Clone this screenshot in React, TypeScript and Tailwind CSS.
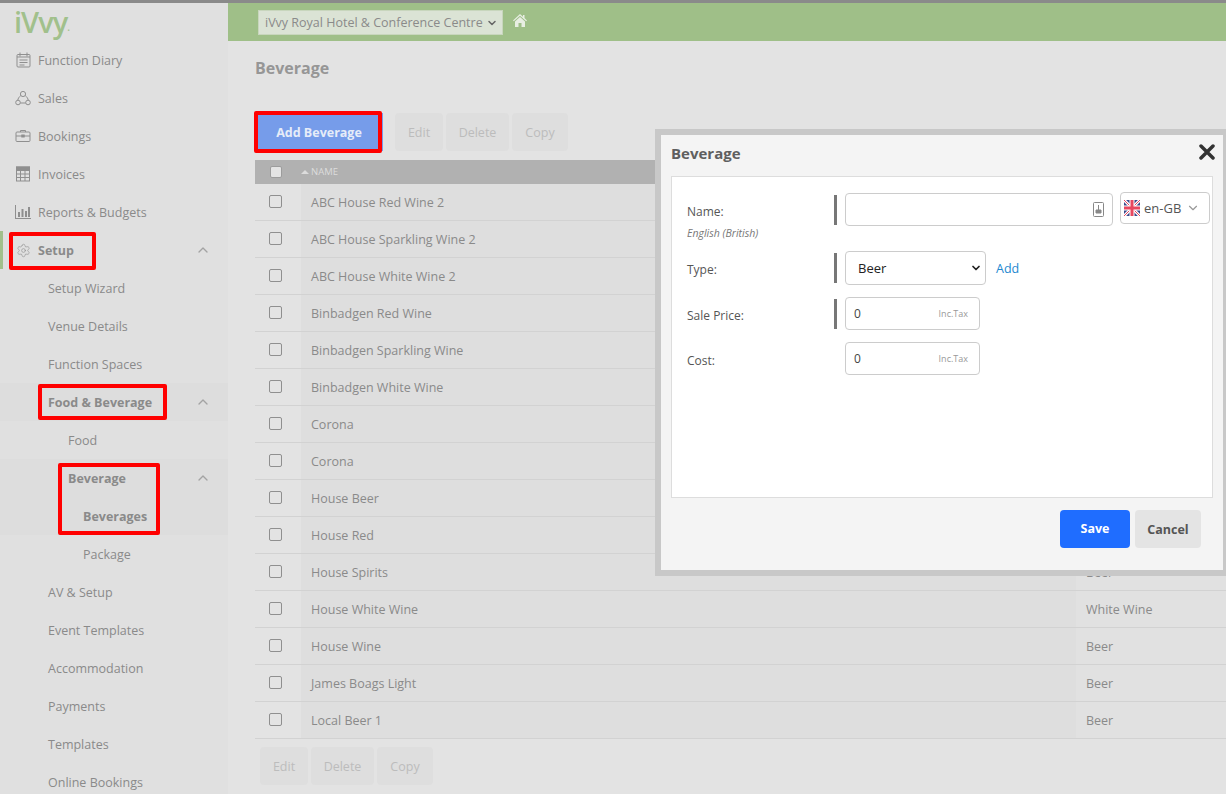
import { ChevronDown, ChevronUp, Settings } from 'lucide-react';
import type { ReactNode } from 'react';

const font = { fontFamily: '"Open Sans", sans-serif' };

const rows = [
  ['ABC House Red Wine 2', ''],
  ['ABC House Sparkling Wine 2', ''],
  ['ABC House White Wine 2', ''],
  ['Binbadgen Red Wine', ''],
  ['Binbadgen Sparkling Wine', ''],
  ['Binbadgen White Wine', ''],
  ['Corona', ''],
  ['Corona', ''],
  ['House Beer', ''],
  ['House Red', ''],
  ['House Spirits', 'Beer'],
  ['House White Wine', 'White Wine'],
  ['House Wine', 'Beer'],
  ['James Boags Light', 'Beer'],
  ['Local Beer 1', 'Beer'],
];

const DiaryIcon = () => (
  <svg width="15" height="16" viewBox="0 0 15 16" fill="none" stroke="#8f8f8f" strokeWidth="1">
    <rect x="1" y="2.500" width="13" height="12.500" rx="1" />
    <path d="M4 0.500v4M11 0.500v4M1 5h13M3.500 8h8M3.500 10.500h8M3.500 13h5" />
  </svg>
);

const SalesIcon = () => (
  <svg width="16" height="16" viewBox="0 0 16 16" fill="none" stroke="#8f8f8f" strokeWidth="1">
    <circle cx="8" cy="4" r="2.600" />
    <circle cx="3" cy="12.500" r="2.300" />
    <circle cx="13" cy="12.500" r="2.300" />
    <path d="M5.800 5.500C4 7 3 8.500 2.800 10.200M10.200 5.500c1.800 1.500 2.800 3 3 4.700M5.300 13h5.400" />
  </svg>
);

const BriefcaseIcon = () => (
  <svg width="16" height="16" viewBox="0 0 16 16" fill="none" stroke="#8f8f8f" strokeWidth="1">
    <rect x="1" y="4" width="14" height="9.500" rx="1" />
    <path d="M5.500 4V2.500h5V4M1 8h14" />
    <rect x="6.800" y="7" width="2.400" height="2" fill="#8f8f8f" />
  </svg>
);

const CalcIcon = () => (
  <svg width="14" height="16" viewBox="0 0 14 16" fill="none" stroke="#8f8f8f" strokeWidth="1">
    <rect x="0.500" y="1" width="13" height="14" />
    <rect x="0.500" y="1" width="13" height="3.500" fill="#8f8f8f" />
    <path d="M.5 8h13M.5 11.500h13M4.500 4.500V15M9 4.500V15" />
  </svg>
);

const ReportIcon = () => (
  <svg width="16" height="16" viewBox="0 0 16 16" fill="#8f8f8f">
    <path d="M0 1h1v13h15v1H0z" />
    <rect x="3" y="8" width="2" height="5" />
    <rect x="6.500" y="5" width="2" height="8" />
    <rect x="10" y="7" width="2" height="6" />
    <rect x="13" y="3" width="2" height="10" />
  </svg>
);

const Flag = () => (
  <svg width="16" height="16" viewBox="0 0 16 16">
    <rect width="16" height="16" rx="1" fill="#3b4a8c" />
    <path d="M0 0 16 16M16 0 0 16" stroke="#fff" strokeWidth="3" />
    <path d="M0 0 16 16M16 0 0 16" stroke="#e8475f" strokeWidth="1" />
    <path d="M8 0v16M0 8h16" stroke="#fff" strokeWidth="5" />
    <path d="M8 0v16M0 8h16" stroke="#e8475f" strokeWidth="3" />
  </svg>
);

const NavItem = ({ icon, label, bold, pad = 'pl-[38px]', chevron, shaded }: {
  icon?: ReactNode; label: string; bold?: boolean; pad?: string; chevron?: boolean; shaded?: boolean;
}) => (
  <div className={`relative flex h-[38px] items-center text-[12.5px] ${pad} ${bold ? 'font-bold' : ''} ${shaded ? 'bg-[#dddddd]' : ''}`}>
    {icon && <span className="absolute left-[15px] flex w-4 justify-center">{icon}</span>}
    <span className="pt-[2px]">{label}</span>
    {chevron && <ChevronUp className="absolute left-[195px] text-[#a3a3a3]" size={16} strokeWidth={2} />}
  </div>
);

const DimButton = ({ label, width }: { label: string; width: string }) => (
  <div className={`flex h-[38px] items-center justify-center rounded-sm bg-[#dedede] pt-[2px] text-[12.5px] text-[#bcbcbc] ${width}`}>{label}</div>
);

const Label = ({ children, bar }: { children: ReactNode; bar?: boolean }) => (
  <div className="flex w-[150px] shrink-0 items-center justify-between text-[12px] text-[#555555]">
    <span className="pt-[4px]">{children}</span>
    {bar && <span className="h-[30px] w-[3px] bg-[#777777]" />}
  </div>
);

const TaxInput = () => (
  <div className="ml-[8px] flex h-[33px] w-[135px] items-center justify-between rounded-sm border border-[#cccccc] bg-white pl-[8px] pr-[11px] text-[12px] text-[#444444]">
    <span>0</span>
    <span className="text-[9px] text-[#999999]">Inc.Tax</span>
  </div>
);

const RedBox = ({ className }: { className: string }) => (
  <div className={`pointer-events-none absolute rounded-[2px] border-[4px] border-[#ff0000] ${className}`} />
);

export default function App() {
  return (
    <div className="relative h-[794px] w-[1226px] overflow-hidden bg-[#e3e3e3] text-[#8a8a8a]" style={font}>
      <div className="h-[3px] bg-[#8a8a8a]" />
      <div className="flex h-[791px]">
        <aside className="w-[228px] shrink-0 overflow-hidden bg-[#e0e0e0]">
          <div className="flex h-[38px] items-center pl-[14px] text-[29px] font-semibold leading-[38px] tracking-[-1px] text-[#a1c08c]">iVvy<span className="self-end text-[10px] leading-[28px]">.</span></div>
          <NavItem icon={<DiaryIcon />} label="Function Diary" />
          <NavItem icon={<SalesIcon />} label="Sales" />
          <NavItem icon={<BriefcaseIcon />} label="Bookings" />
          <NavItem icon={<CalcIcon />} label="Invoices" />
          <NavItem icon={<ReportIcon />} label="Reports & Budgets" />
          <div className="border-l-[3px] border-[#a1c08c]">
            <div className="-ml-[3px]"><NavItem icon={<Settings size={15} strokeWidth={1} color="#8f8f8f" />} label="Setup" bold chevron /></div>
          </div>
          <NavItem pad="pl-[48px]" label="Setup Wizard" />
          <NavItem pad="pl-[48px]" label="Venue Details" />
          <NavItem pad="pl-[48px]" label="Function Spaces" />
          <NavItem pad="pl-[48px]" label="Food & Beverage" bold chevron shaded />
          <NavItem pad="pl-[68px]" label="Food" />
          <NavItem pad="pl-[68px]" label="Beverage" bold chevron shaded />
          <NavItem pad="pl-[83px]" label="Beverages" bold shaded />
          <NavItem pad="pl-[83px]" label="Package" />
          <NavItem pad="pl-[48px]" label="AV & Setup" />
          <NavItem pad="pl-[48px]" label="Event Templates" />
          <NavItem pad="pl-[48px]" label="Accommodation" />
          <NavItem pad="pl-[48px]" label="Payments" />
          <NavItem pad="pl-[48px]" label="Templates" />
          <NavItem pad="pl-[48px]" label="Online Bookings" />
        </aside>

        <main className="min-w-0 flex-1">
          <div className="flex h-[38px] items-center gap-[10px] bg-[#9fbf88] pl-[30px]">
            <div className="mt-[1px] flex h-[25px] w-[245px] items-center justify-between border border-[#c8d6bd] bg-[#dbe3d5] pl-[6px] pr-1 text-[12.5px] text-[#8a8a8a]">
              <span className="pt-[2px]">iVvy Royal Hotel &amp; Conference Centre</span>
              <ChevronDown size={12} strokeWidth={3} color="#666666" />
            </div>
            <svg width="14" height="13" viewBox="0 0 14 13" fill="#e8eee3" className="mb-1">
              <path d="M7 0 0 6.500l.8.800L7 1.700l6.200 5.600.8-.8L11.500 4V1H10v1.700zM2 7.500V13h3.500V9h3v4H12V7.500L7 3z" />
            </svg>
          </div>
          <div className="pl-[27px]">
            <h1 className="pt-[16px] text-[16px] font-bold leading-[22px] text-[#969696]">Beverage</h1>
            <div className="mt-[34px] flex h-[38px] items-center">
              <div className="flex h-[38px] w-[128px] items-center justify-center bg-[#769cea] pt-[2px] text-[12.5px] font-bold text-[#e6ecf8]">Add Beverage</div>
              <div className="ml-[12px] flex gap-[3px]">
                <DimButton label="Edit" width="w-[48px]" />
                <DimButton label="Delete" width="w-[63px]" />
                <DimButton label="Copy" width="w-[56px]" />
              </div>
            </div>
            <div className="mt-[9px] flex h-[24px] items-center bg-[#b1b1b1] text-[9.5px] text-[#dcdcdc]">
              <span className="ml-[15px] h-3 w-3 rounded-[2px] border border-[#9c9c9c] bg-[#e4e4e4]" />
              <span className="ml-[19px] h-0 w-0 border-x-[4px] border-b-[4px] border-x-transparent border-b-[#dcdcdc]" />
              <span className="ml-[2px]">NAME</span>
            </div>
            {rows.map((r, i) => (
              <div key={i} className="flex h-[37px] border-b border-[#d2d2d2] text-[12.5px] text-[#8a8a8a]">
                <div className="flex w-[46px] items-center pl-[14px]">
                  <span className="mb-[2px] h-[13px] w-[13px] rounded-[2px] border border-[#8f8f8f] bg-[#e3e3e3]" />
                </div>
                <div className="flex w-[775px] items-center bg-[#dedede] pl-[10px] pt-[2px]">{r[0]}</div>
                <div className="flex flex-1 items-center bg-[#e1e1e1] pl-[10px] pt-[2px]">{r[1]}</div>
              </div>
            ))}
            <div className="ml-[5px] mt-[8px] flex gap-[3px]">
              <DimButton label="Edit" width="w-[48px]" />
              <DimButton label="Delete" width="w-[63px]" />
              <DimButton label="Copy" width="w-[56px]" />
            </div>
          </div>
        </main>
      </div>

      <RedBox className="left-[9px] top-[232px] h-[38px] w-[87px]" />
      <RedBox className="left-[38px] top-[384px] h-[36px] w-[129px]" />
      <RedBox className="left-[58px] top-[463px] h-[72px] w-[102px]" />
      <RedBox className="left-[254px] top-[111px] h-[42px] w-[128px]" />

      {/* dialog */}
      <div className="absolute left-[655px] top-[129px] h-[447px] w-[571px] border-[6px] border-r-[3px] border-[#c8c8c8] bg-[#f4f4f4]">
        <div className="relative flex h-[41px] items-center pb-[5px] pl-[10px] text-[15px] font-bold text-[#5f5f5f]">
          Beverage
          <svg width="16" height="16" viewBox="0 0 16 16" className="absolute right-[8px] top-[9px]" stroke="#333333" strokeWidth="3.500" strokeLinecap="round">
            <path d="M2 2l12 12M14 2 2 14" />
          </svg>
        </div>
        <div className="mx-[10px] h-[322px] border border-[#dddddd] bg-white pl-[15px] pt-[16px]">
          <div className="flex h-[33px]">
            <Label bar>Name:</Label>
            <div className="ml-[8px] flex h-[33px] w-[268px] items-center justify-end rounded-sm border border-[#cccccc] pr-2">
              <svg width="11" height="15" viewBox="0 0 11 15" fill="none" stroke="#888888">
                <rect x="0.500" y="0.500" width="10" height="14" rx="1" />
                <path d="M5.500 3v5M3 8h5v3H3z" fill="#888888" strokeWidth="1" />
              </svg>
            </div>
            <div className="-mt-[1px] ml-[7px] flex h-[32px] w-[90px] items-center rounded-sm border border-[#cccccc] pl-[3px] text-[13px] text-[#555555]">
              <Flag />
              <span className="ml-1 pt-[2px]">en-GB</span>
              <ChevronDown className="ml-[5px]" size={14} color="#999999" />
            </div>
          </div>
          <div className="h-[23px] text-[10.5px] italic leading-[14px] text-[#777777]">English (British)</div>
          <div className="mt-[2px] flex h-[33px]">
            <Label bar>Type:</Label>
            <div className="ml-[8px] flex h-[34px] w-[141px] items-center justify-between rounded-sm border border-[#cccccc] bg-white pl-3 pr-[3px] text-[13px] text-[#222222]">
              <span className="pt-[2px]">Beer</span>
              <ChevronDown size={12} strokeWidth={3.500} color="#222222" />
            </div>
            <a className="ml-[10px] flex items-center pt-[4px] text-[12.5px] text-[#1d88d0]">Add</a>
          </div>
          <div className="mt-[13px] flex h-[33px]">
            <Label bar>Sale Price:</Label>
            <TaxInput />
          </div>
          <div className="mt-[12px] flex h-[33px]">
            <Label>Cost:</Label>
            <TaxInput />
          </div>
        </div>
        <div className="mt-[12px] flex justify-end gap-[5px] pr-[22px]">
          <button className="flex h-[38px] w-[70px] items-center justify-center rounded-sm bg-[#1f6dff] text-[12.5px] font-bold text-white">Save</button>
          <button className="flex h-[38px] w-[66px] items-center justify-center rounded-sm bg-[#e4e4e4] pt-[2px] text-[12.5px] font-bold text-[#555555]">Cancel</button>
        </div>
      </div>
    </div>
  );
}
